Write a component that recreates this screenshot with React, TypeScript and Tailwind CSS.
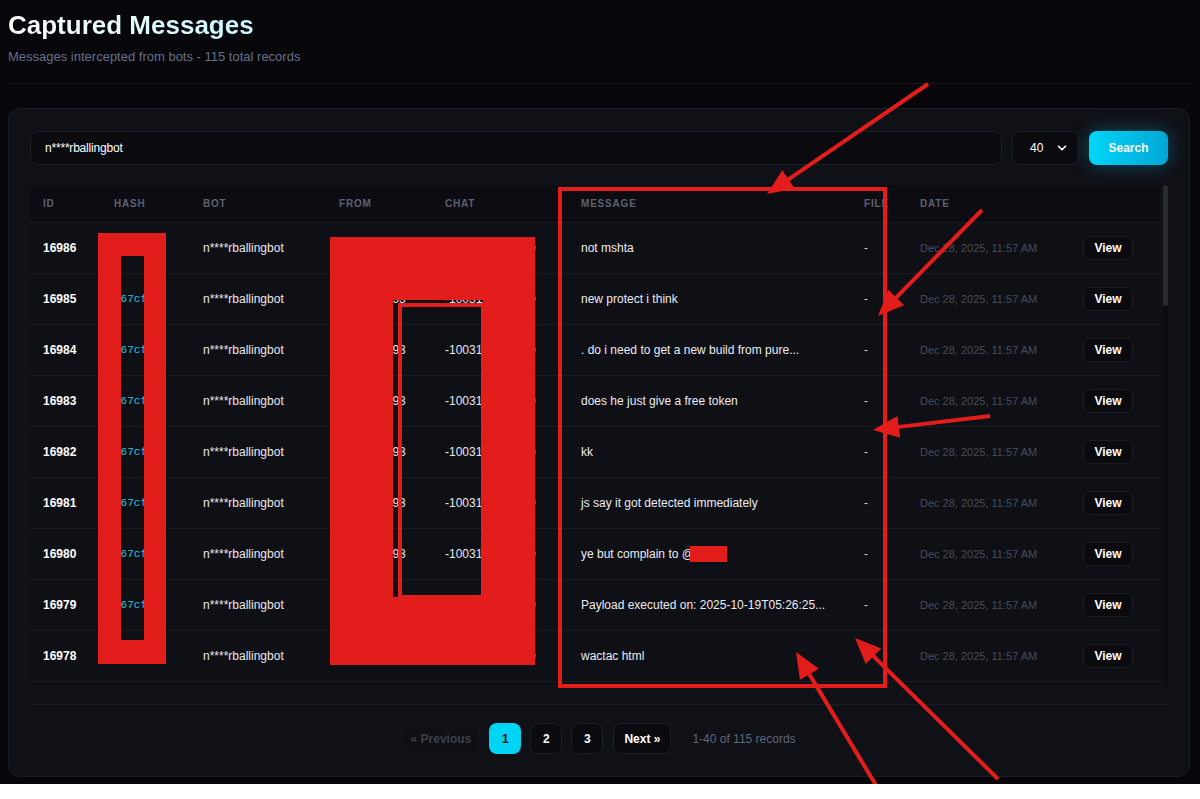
import { ChevronDown } from 'lucide-react';

const BOT = 'n****rballingbot';

const firstMessages = [
  'not mshta',
  'new protect i think',
  '. do i need to get a new build from pure builder or is the old one fine',
  'does he just give a free token',
  'kk',
  'js say it got detected immediately',
  'ye but complain to @',
  'Payload executed on: 2025-10-19T05:26:25.118Z host check ok',
  'wactac html',
];

const fillerMessages = [
  'ok',
  'send the new link',
  'works on my end',
  'lol',
  'try again later',
  'did it run',
  'check logs',
  'yea',
];

const rows = Array.from({ length: 40 }, (_, i) => ({
  id: 16986 - i,
  hash: 'b67cf2e',
  from: '7340012893',
  chat: '-1003124567890',
  message: firstMessages[i] ?? fillerMessages[i % fillerMessages.length],
}));

const truncate = (s: string) => (s.length > 40 ? s.slice(0, 40) + '...' : s);

const cols = 'grid grid-cols-[71px_89px_136px_106px_136px_283px_56px_163px_1fr] pl-[13px] items-center';

// red arrow used for the annotation overlay
function Arrow({ x1, y1, x2, y2 }: { x1: number; y1: number; x2: number; y2: number }) {
  const dx = x2 - x1;
  const dy = y2 - y1;
  const len = Math.hypot(dx, dy);
  const ux = dx / len;
  const uy = dy / len;
  const L = 26;
  const W = 11;
  const bx = x2 - ux * L;
  const by = y2 - uy * L;
  const p1 = `${x2},${y2}`;
  const p2 = `${bx - uy * W},${by + ux * W}`;
  const p3 = `${bx + uy * W},${by - ux * W}`;
  return (
    <g>
      <line x1={x1} y1={y1} x2={bx + ux * 4} y2={by + uy * 4} stroke="#e31c1c" strokeWidth={4} />
      <polygon points={`${p1} ${p2} ${p3}`} fill="#e31c1c" />
    </g>
  );
}

export default function App() {
  return (
    <div className="relative bg-[#07070b] pl-2 pr-[10px] pb-[7px] font-['Liberation_Sans',Arial,sans-serif] text-white">
      {/* Header */}
      <header className="pt-[9px] pb-[17px] border-b border-[#16161d]">
        <h1 className="text-[26px] font-bold leading-[32px] bg-gradient-to-r from-white to-[#c8f6fc] bg-clip-text text-transparent w-fit">
          Captured Messages
        </h1>
        <p className="mt-[7px] text-[13px] leading-[18px] text-[#66708a]">Messages intercepted from bots - 115 total records</p>
      </header>

      {/* Card */}
      <div className="mt-[24px] rounded-xl border border-[#1c1c25] bg-[#101017] px-[21px] pt-[22px] pb-[22px]">
        {/* Search row */}
        <div className="flex gap-[10px] h-[34px]">
          <div className="flex-1 flex items-center rounded-lg border border-[#1d1d26] bg-[#0a0a0f] px-[14px] text-[12px] text-white tracking-[-0.2px]">
            {BOT}
          </div>
          <div className="w-[67px] flex items-center justify-between rounded-lg border border-[#1d1d26] bg-[#0a0a0f] pl-[17px] pr-[9px] text-[12px]">
            <span>40</span>
            <ChevronDown size={14} strokeWidth={3} />
          </div>
          <button className="w-[79px] rounded-lg bg-gradient-to-r from-[#00d6f7] to-[#00a6d6] text-[12px] font-bold text-white shadow-[0_0_18px_rgba(0,200,240,0.35)]">
            Search
          </button>
        </div>

        {/* Table with its scrollbar */}
        <div className="mt-[20px] h-[500px] flex gap-[3px]">
          <div className="flex-1 overflow-hidden bg-[#0f0f16]">
            <div className={`${cols} h-[38px] bg-[#0c0c12] border-b border-[#1b1b23] text-[10px] font-bold tracking-[0.8px] text-[#5c6272]`}>
              <span>ID</span>
              <span>HASH</span>
              <span>BOT</span>
              <span>FROM</span>
              <span>CHAT</span>
              <span>MESSAGE</span>
              <span>FILE</span>
              <span>DATE</span>
              <span />
            </div>
            {rows.map((r) => (
              <div key={r.id} className={`${cols} h-[51px] border-b border-[#1b1b23] text-[12px]`}>
                <span className="font-bold">{r.id}</span>
                <span className="min-w-0 font-['Liberation_Mono',monospace] text-[11px] text-[#1fc8e6] overflow-hidden whitespace-nowrap">
                  {r.hash}
                </span>
                <span className="text-[#e8e8ee]">{BOT}</span>
                <span className="text-[#e8e8ee]">{r.from}</span>
                <span className="min-w-0 text-[#e8e8ee] overflow-hidden whitespace-nowrap">{r.chat}</span>
                <span className="text-[#ececf2] whitespace-nowrap">{truncate(r.message)}</span>
                <span className="text-[#d0d0d8]">-</span>
                <span className="text-[11px] text-[#474c5a]">Dec 28, 2025, 11:57 AM</span>
                <span>
                  <button className="h-[24px] w-[50px] rounded-md border border-[#1c1c25] bg-[#0a0a0f] text-[12px] font-bold">
                    View
                  </button>
                </span>
              </div>
            ))}
          </div>
          <div className="w-[5px] rounded-full bg-[#0c0c11]">
            <div className="h-[121px] rounded-full bg-[#2a2a33]" />
          </div>
        </div>

        {/* Pagination */}
        <div className="mt-[19px] border-t border-[#1b1b23] pt-[18px] flex items-center justify-center gap-[9px] text-[12px] font-bold">
          <button className="h-[31px] w-[77px] rounded-lg border border-[#15151c] bg-[#0f0f15] text-[#3d404c]">« Previous</button>
          <button className="ml-[1px] h-[31px] w-[32px] rounded-lg bg-[#00d4f5] text-[#0a0a10]">1</button>
          <button className="h-[31px] w-[32px] rounded-lg border border-[#1d1d26] bg-[#0a0a0f]">2</button>
          <button className="h-[31px] w-[32px] rounded-lg border border-[#1d1d26] bg-[#0a0a0f]">3</button>
          <button className="ml-[1px] h-[31px] w-[58px] rounded-lg border border-[#1d1d26] bg-[#0a0a0f]">Next »</button>
          <span className="ml-[12px] font-normal text-[#5f6678]">1-40 of 115 records</span>
        </div>
      </div>

      {/* Annotation overlay (redactions and arrows) */}
      <svg className="absolute top-0 left-0 pointer-events-none" width={1200} height={799} viewBox="0 0 1200 799">
        <path fillRule="evenodd" fill="#e31c1c" d="M98 233H166V664H98Z M121 256V640H144V256Z" />
        <path fillRule="evenodd" fill="#e31c1c" d="M330 237H535V665H330Z M393 300V597H483V300Z" />
        <rect x={400} y={305} width={83} height={292} fill="none" stroke="#e31c1c" strokeWidth={4} />
        <rect x={690} y={546} width={37} height={16} fill="#e31c1c" />
        <rect x={560} y={189} width={325} height={497} fill="none" stroke="#e31c1c" strokeWidth={4} />
        <Arrow x1={928} y1={84} x2={767} y2={194} />
        <Arrow x1={982} y1={210} x2={878} y2={316} />
        <Arrow x1={990} y1={416} x2={873} y2={430} />
        <Arrow x1={883} y1={797} x2={796} y2={652} />
        <Arrow x1={998} y1={779} x2={855} y2={638} />
      </svg>
    </div>
  );
}
